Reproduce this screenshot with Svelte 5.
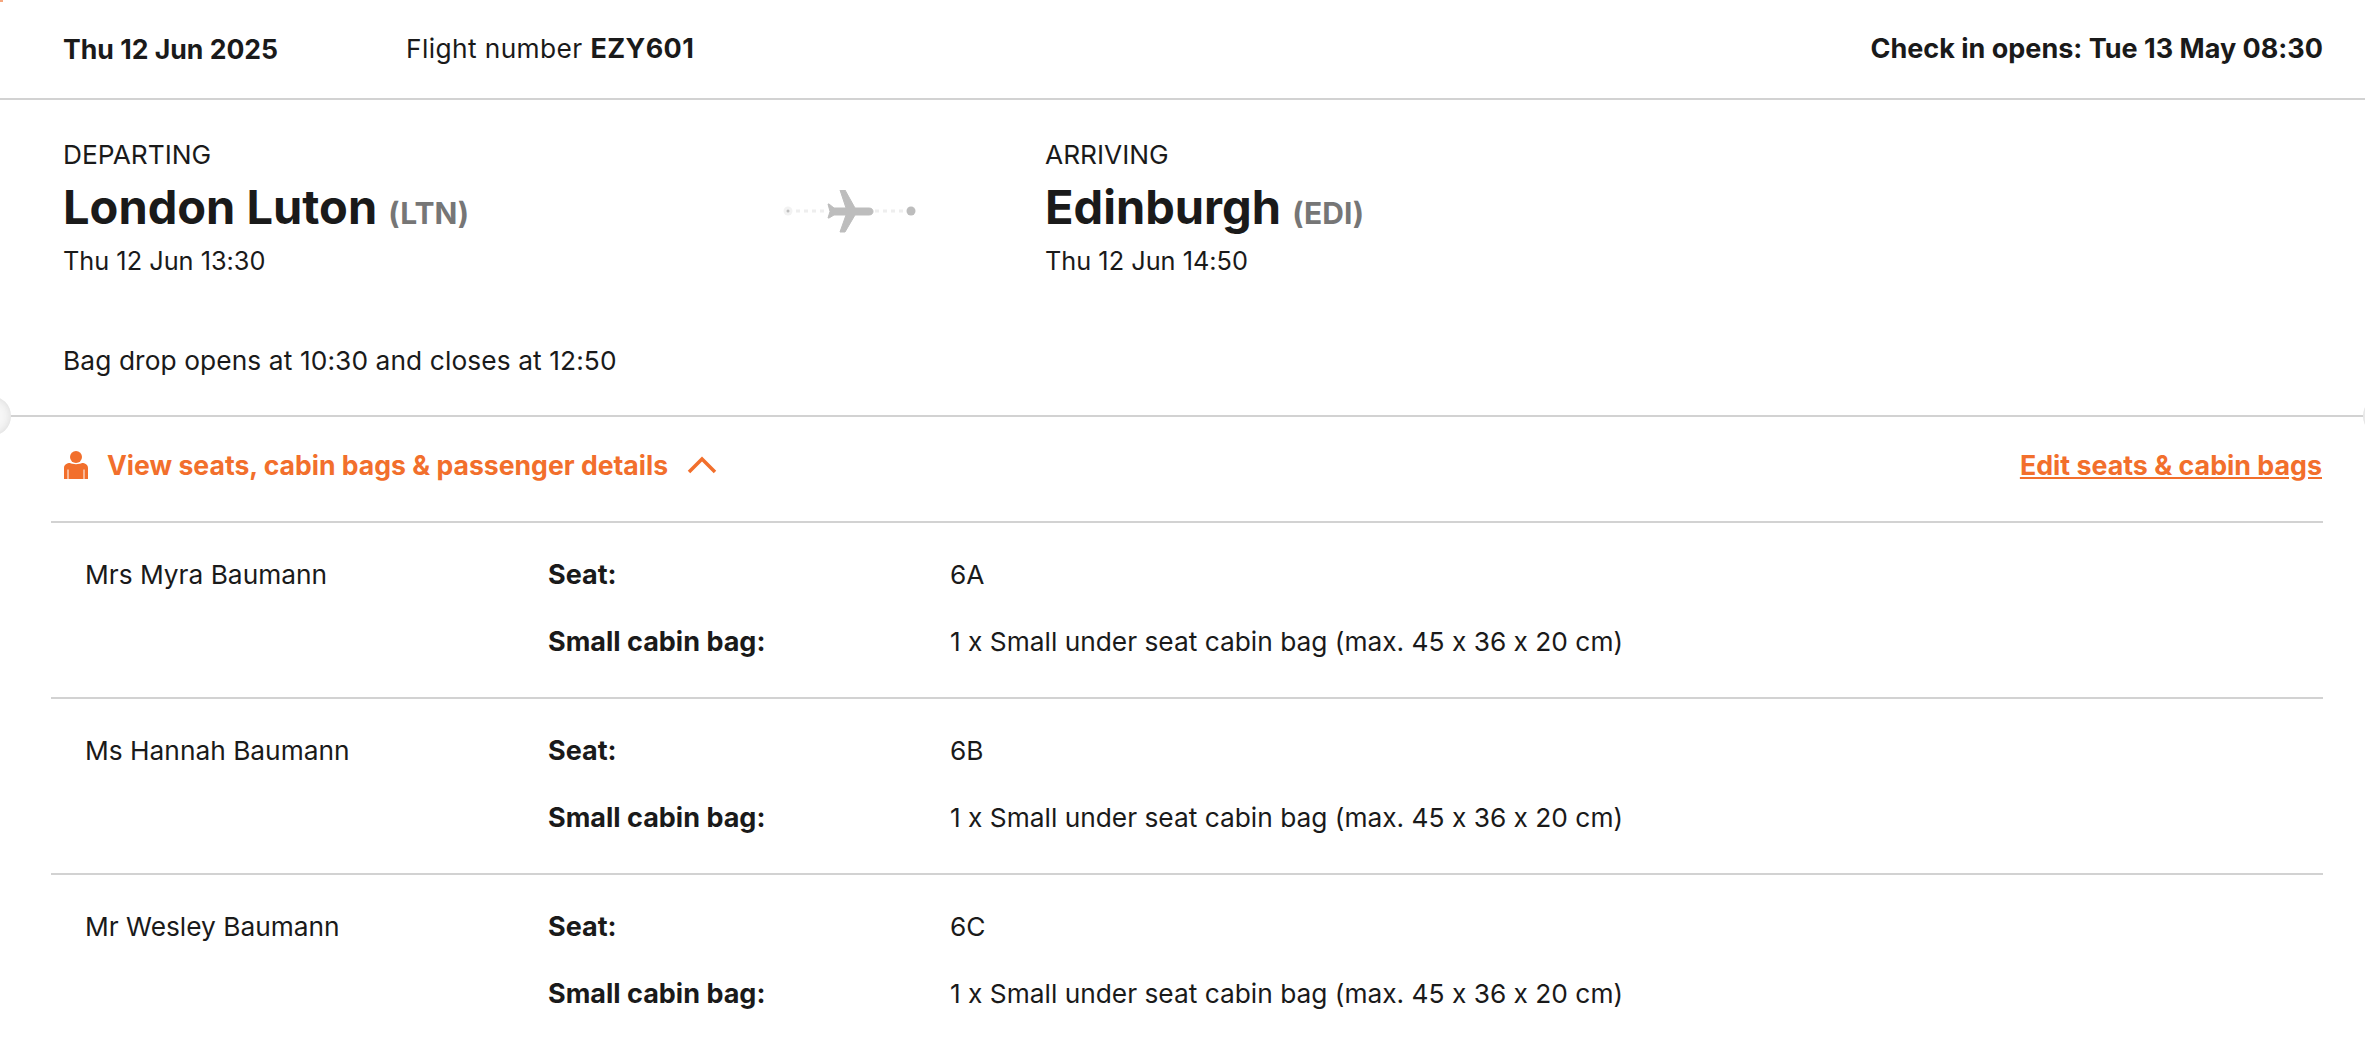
<script lang="ts">
  interface Passenger {
    name: string;
    seat: string;
  }

  const passengers: Passenger[] = [
    { name: 'Mrs Myra Baumann', seat: '6A' },
    { name: 'Ms Hannah Baumann', seat: '6B' },
    { name: 'Mr Wesley Baumann', seat: '6C' }
  ];
</script>

<div class="card">
  <span class="corner" aria-hidden="true"></span>
  <header class="topbar">
    <strong class="date">Thu 12 Jun 2025</strong>
    <span class="flight">Flight number <strong>EZY601</strong></span>
    <strong class="checkin">Check in opens: Tue 13 May 08:30</strong>
  </header>

  <section class="route">
    <div class="stop">
      <div class="caption">DEPARTING</div>
      <h2>London Luton <span class="code">(LTN)</span></h2>
      <div class="when">Thu 12 Jun 13:30</div>
    </div>
    <svg class="path" width="136" height="44" viewBox="0 0 136 44" aria-hidden="true">
      <circle cx="6" cy="21" r="4.5" fill="#f2f2f2" />
      <circle cx="6" cy="21" r="1.5" fill="#bdbdbd" />
      <line x1="14" y1="21" x2="44" y2="21" stroke="#eeeeee" stroke-width="3" stroke-dasharray="4 4" />
      <line x1="93" y1="21" x2="123" y2="21" stroke="#eeeeee" stroke-width="3" stroke-dasharray="4 4" />
      <circle cx="129" cy="21" r="4.5" fill="#bdbdbd" />
      <path
        transform="translate(46 0)"
        fill="#bdbdbd"
        stroke="#bdbdbd"
        stroke-linejoin="round"
        d="M41 18C44 18 45 20 45 21.500C45 23 44 25 41 25L27 25L17 42L12 42L18 25L6 25L1 28L0 28L2 21.500L0 14L1 14L6 18L18 18L12 0L17 0L27 18Z"
      />
    </svg>
    <div class="stop">
      <div class="caption">ARRIVING</div>
      <h2>Edinburgh <span class="code">(EDI)</span></h2>
      <div class="when">Thu 12 Jun 14:50</div>
    </div>
  </section>

  <p class="bagdrop">Bag drop opens at 10:30 and closes at 12:50</p>

  <div class="divider">
    <span class="notch left" aria-hidden="true"></span>
    <span class="notch right" aria-hidden="true"></span>
  </div>

  <div class="details-bar">
    <button type="button" class="toggle">
      <svg width="24" height="28" viewBox="0 0 24 28" aria-hidden="true">
        <circle cx="12" cy="6" r="6" fill="#f26f2c" />
        <path
          fill="#f26f2c"
          d="M0 17C0 13.500 3 12 6 12C8 13.500 16 13.500 18 12C21 12 24 13.500 24 17L24 28L20.500 28L20.500 18.500L19.500 18.500L19.500 28L4.500 28L4.500 18.500L3.500 18.500L3.500 28L0 28Z"
        />
      </svg>
      <span>View seats, cabin bags &amp; passenger details</span>
      <svg class="chevron" width="30" height="18" viewBox="0 0 30 18" aria-hidden="true">
        <path d="M2 16L15 3L28 16" fill="none" stroke="#f26f2c" stroke-width="3.500" />
      </svg>
    </button>
    <button type="button" class="edit">Edit seats &amp; cabin bags</button>
  </div>

  <div class="passengers">
    {#each passengers as passenger}
      <div class="passenger">
        <div class="name">{passenger.name}</div>
        <strong>Seat:</strong>
        <div>{passenger.seat}</div>
        <strong class="bag-label">Small cabin bag:</strong>
        <div class="bag-value">1 x Small under seat cabin bag (max. 45 x 36 x 20 cm)</div>
      </div>
    {/each}
  </div>
</div>

<style>
  :global(body) {
    background: #ffffff;
    overflow: hidden;
  }

  .card {
    position: relative;
    height: 1044px;
    overflow: hidden;
    color: #1a1a1a;
    font-family: Inter, "Liberation Sans", sans-serif;
    font-feature-settings: "calt" 0;
    font-size: 26.3px;
    line-height: 34px;
  }

  .corner {
    position: absolute;
    top: 0;
    left: 0;
    width: 3px;
    height: 2px;
    background: #f6a77e;
  }

  strong {
    font-size: 27px;
    font-weight: 700;
  }

  .topbar {
    display: flex;
    align-items: center;
    height: 98px;
    padding: 0 42px 0 63px;
    border-bottom: 2px solid #d2d2d2;
  }

  .date {
    width: 343px;
    font-size: 26.6px;
  }

  .flight {
    letter-spacing: 0.4px;
  }

  .checkin {
    margin-left: auto;
  }

  .route {
    display: grid;
    grid-template-columns: 719px 263px 1fr;
    padding: 38px 63px 0;
  }

  .path {
    margin-top: 52px;
  }

  .caption {
    height: 34px;
  }

  h2 {
    margin: 7px 0 0;
    font-size: 47px;
    line-height: 56px;
    font-weight: 700;
  }

  .code {
    color: #767676;
    font-size: 30px;
  }

  .when {
    margin-top: 3px;
    font-size: 25.3px;
  }

  .bagdrop {
    margin: 66px 0 0 63px;
    letter-spacing: 0.1px;
  }

  .divider {
    position: relative;
    height: 2px;
    margin-top: 37px;
    background: #d2d2d2;
  }

  .notch {
    position: absolute;
    top: -19px;
    width: 40px;
    height: 40px;
    border-radius: 50%;
    background: #f6f6f6;
    box-shadow: inset 0 0 8px #d8d8d8;
  }

  .notch.left {
    left: -29px;
  }

  .notch.right {
    right: -38px;
  }

  .details-bar {
    display: flex;
    align-items: center;
    justify-content: space-between;
    height: 96px;
    padding: 0 43px 8px 64px;
  }

  button {
    padding: 0;
    border: 0;
    background: none;
    color: #f26f2c;
    font: inherit;
    font-size: 26.8px;
    font-weight: 700;
  }

  .toggle {
    display: flex;
    align-items: center;
    gap: 19px;
    font-size: 26.6px;
  }

  .chevron {
    margin-left: 0;
  }

  .edit {
    text-decoration: underline;
  }

  .passengers {
    margin: 0 42px 0 51px;
  }

  .passenger {
    display: grid;
    grid-template-columns: 463px 402px 1fr;
    grid-auto-rows: 34px;
    row-gap: 33px;
    height: 176px;
    padding: 35px 0 0 34px;
    box-sizing: border-box;
    border-top: 2px solid #d2d2d2;
  }

  .bag-label {
    grid-column: 2;
  }

  .bag-value {
    grid-column: 3;
  }
</style>
